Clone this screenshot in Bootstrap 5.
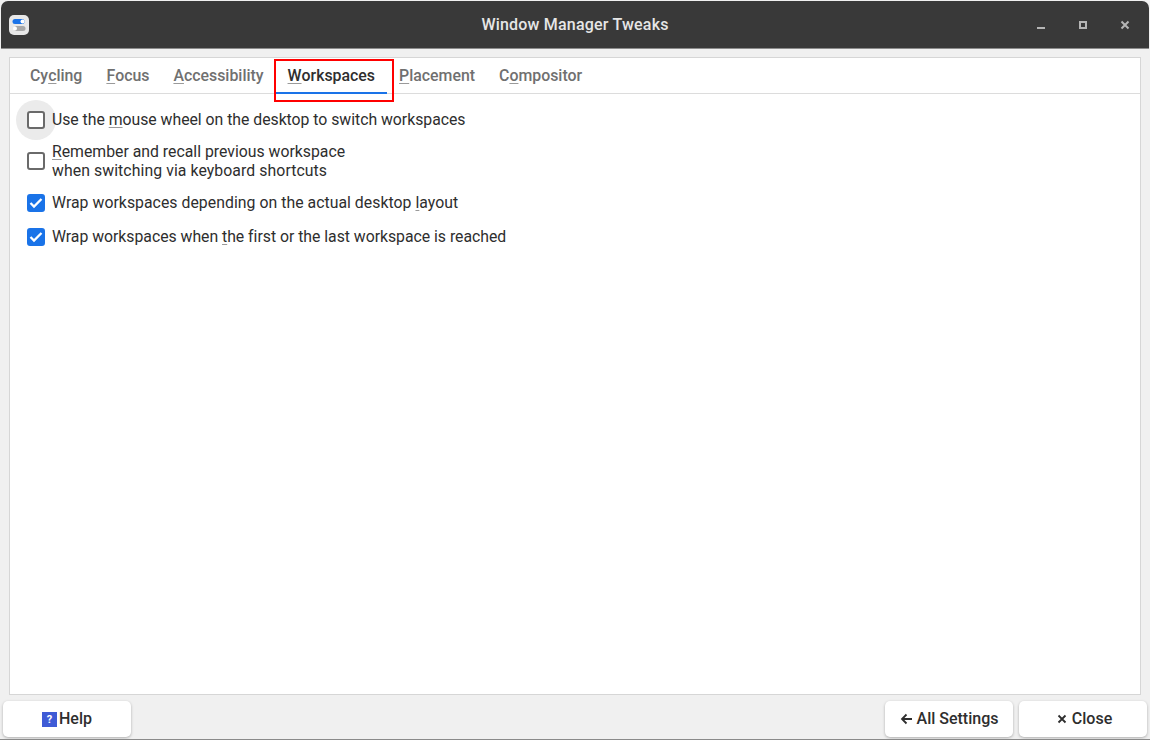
<!DOCTYPE html>
<html lang="en">
<head>
<meta charset="utf-8">
<title>Window Manager Tweaks</title>
<link href="https://cdn.jsdelivr.net/npm/bootstrap@5.3.0/dist/css/bootstrap.min.css" rel="stylesheet">
<style>
html,body{height:100%;margin:0;background:#fff;overflow:hidden}
body{font-family:Roboto,"Liberation Sans",sans-serif;font-size:15.8px;color:#2e2e2e}
.win{width:1150px;height:740px;background:#f0f0f0;border-bottom:1px solid #8a8a8a;overflow:hidden}
.tbar{height:48px;margin:1px 1px 0 1px;background:#393939;color:#e6e6e6;font-weight:500;font-size:16px;letter-spacing:.2px;border-bottom:1px solid #8c8c8c;border-radius:7px 7px 0 0;padding-top:1px}
.ttl{flex:1;text-align:center}
.tleft{flex:0 0 130px;padding-left:8px}
.appico{width:20px;height:20px;display:block}
.wbtns{flex:0 0 130px;gap:30px;justify-content:flex-end;padding-right:18px}
.wbtns svg{display:block;width:12px;height:12px}
.panel{height:638px;margin:8px 9px 0 9px;background:#fff;border:1px solid #d6d6d6}
.tabsrow{height:36px;border-bottom:1px solid #dcdcdc;padding-left:8px}
.tabx{position:relative;height:35px;padding:0 12px;display:flex;align-items:center;color:#707070;font-weight:500;font-size:15.88px;text-decoration:none}
.tabx.on{color:#2e2e2e}
.tabx.on::after{content:"";position:absolute;left:0;right:0;bottom:-1px;height:2px;background:#1a73e8}
.redbox{position:absolute;left:-2px;right:-7px;top:1px;height:43px;border:2px solid #f00;pointer-events:none}
.kk{text-decoration:underline;text-decoration-color:#9a9a9a;text-decoration-thickness:1px;text-underline-offset:2px;text-decoration-skip-ink:none}
.optlist{padding:9px 16px 0 16px}
.optrow{display:flex;align-items:center;gap:6px;line-height:19px;color:#2e2e2e}
.optrow.r1{height:33px}
.optrow.r2{height:39px;margin-top:5px}
.optrow.r3{height:34px;margin-top:5px}
.optrow.r4{height:34px}
.optxt{position:relative}
.sp0{letter-spacing:-.02px}
.sp1{letter-spacing:.04px}
.sp2{letter-spacing:.08px}
.boxw{position:relative;width:20px;height:20px;flex:none;display:flex;align-items:center;justify-content:center;margin-top:1px}
.optrow.r3 .boxw,.optrow.r4 .boxw{margin-top:2px}
.optrow .form-check-input{width:18px;height:18px;margin:0;float:none;border:2px solid #6a6a6a;border-radius:3px;background-color:#fff;position:relative}
.optrow .form-check-input:checked{background-color:#1a73e8;border-color:#1a73e8;background-size:14px 14px;background-image:url("data:image/svg+xml,%3csvg xmlns='http://www.w3.org/2000/svg' viewBox='0 0 14 14'%3e%3cpath fill='none' stroke='%23fff' stroke-width='2.300' d='M1.500 7l3.500 3.500L12.500 3'/%3e%3c/svg%3e")}
.halo{position:absolute;left:-10px;top:-10px;width:40px;height:40px;border-radius:50%;background:#ebebeb}
.footx{padding:6px 3px 0 3px}
.fgap{gap:6px}
.fbtn{width:128px;height:36px;padding:0;background:#fff;border:0;border-radius:5px;box-shadow:0 1px 3px rgba(0,0,0,.28);color:#2e2e2e;font-weight:500;font-size:16px;display:flex;align-items:center;justify-content:center;gap:2px}
.fbtn:hover{background:#fff;color:#2e2e2e}
.fbtn.gapw{gap:4px}
.fbtn.gapc{gap:5px;padding-left:3px}
.helpi{width:15px;height:15px;background:#3f5bd6;color:#fff;font-size:11px;line-height:15px;text-align:center;font-weight:700;display:block}
.fbtn svg{display:block}
</style>
</head>
<body>
<div class="win d-flex flex-column">
  <div class="tbar d-flex align-items-center">
    <div class="tleft"><svg class="appico" viewBox="0 0 20 20"><rect width="20" height="20" rx="5" fill="#e8e8e8"/><rect x="3.500" y="4" width="12" height="5" rx="2.500" fill="#1a73e8"/><circle cx="13.500" cy="6.500" r="2" fill="#fff"/><rect x="5" y="11" width="11.500" height="5" rx="2.500" fill="#a8a8a8"/><circle cx="6" cy="13.500" r="2" fill="#fff"/></svg></div>
    <div class="ttl">Window Manager Tweaks</div>
    <div class="wbtns d-flex align-items-center">
      <svg viewBox="0 0 12 12"><rect x="2" y="8" width="8" height="2" fill="#b5b5b5"/></svg>
      <svg viewBox="0 0 12 12"><path d="M2 2h8v8H2z M4 4v4h4V4z" fill="#b5b5b5" fill-rule="evenodd"/></svg>
      <svg viewBox="0 0 12 12"><path d="M2.500 2.500l7 7M9.500 2.500l-7 7" stroke="#b5b5b5" stroke-width="2" fill="none"/></svg>
    </div>
  </div>
  <div class="panel">
    <div class="tabsrow d-flex">
      <a class="tabx" href="#">Cy<span class="kk">c</span>ling</a>
      <a class="tabx" href="#"><span class="kk">F</span>ocus</a>
      <a class="tabx" href="#"><span class="kk">A</span>ccessibility</a>
      <a class="tabx on" href="#"><span class="kk">W</span>orkspaces<span class="redbox"></span></a>
      <a class="tabx" href="#"><span class="kk">P</span>lacement</a>
      <a class="tabx" href="#">C<span class="kk">o</span>mpositor</a>
    </div>
    <div class="optlist">
      <label class="optrow r1"><span class="boxw"><span class="halo"></span><input class="form-check-input" type="checkbox"></span><span class="optxt sp0">Use the <span class="kk">m</span>ouse wheel on the desktop to switch workspaces</span></label>
      <label class="optrow r2"><span class="boxw"><input class="form-check-input" type="checkbox"></span><span class="optxt"><span class="kk">R</span>emember and recall previous workspace<br><span class="sp2">when switching via keyboard shortcuts</span></span></label>
      <label class="optrow r3"><span class="boxw"><input class="form-check-input" type="checkbox" checked></span><span class="optxt sp1">Wrap workspaces depending on the actual desktop <span class="kk">l</span>ayout</span></label>
      <label class="optrow r4"><span class="boxw"><input class="form-check-input" type="checkbox" checked></span><span class="optxt sp0">Wrap workspaces when <span class="kk">t</span>he first or the last workspace is reached</span></label>
    </div>
  </div>
  <div class="footx d-flex justify-content-between">
    <button class="btn fbtn" type="button"><span class="helpi">?</span>Help</button>
    <div class="d-flex fgap">
      <button class="btn fbtn gapw" type="button"><svg width="13" height="12" viewBox="0 0 13 12"><path d="M12 6H2M6.500 1.500L2 6l4.500 4.500" stroke="#2e2e2e" stroke-width="1.800" fill="none"/></svg>All Settings</button>
      <button class="btn fbtn gapc" type="button"><svg width="10" height="10" viewBox="0 0 10 10"><path d="M1.500 1.500l7 7M8.500 1.500l-7 7" stroke="#2e2e2e" stroke-width="1.800" fill="none"/></svg>Close</button>
    </div>
  </div>
</div>
<script src="https://cdn.jsdelivr.net/npm/bootstrap@5.3.0/dist/js/bootstrap.bundle.min.js"></script>
</body>
</html>
